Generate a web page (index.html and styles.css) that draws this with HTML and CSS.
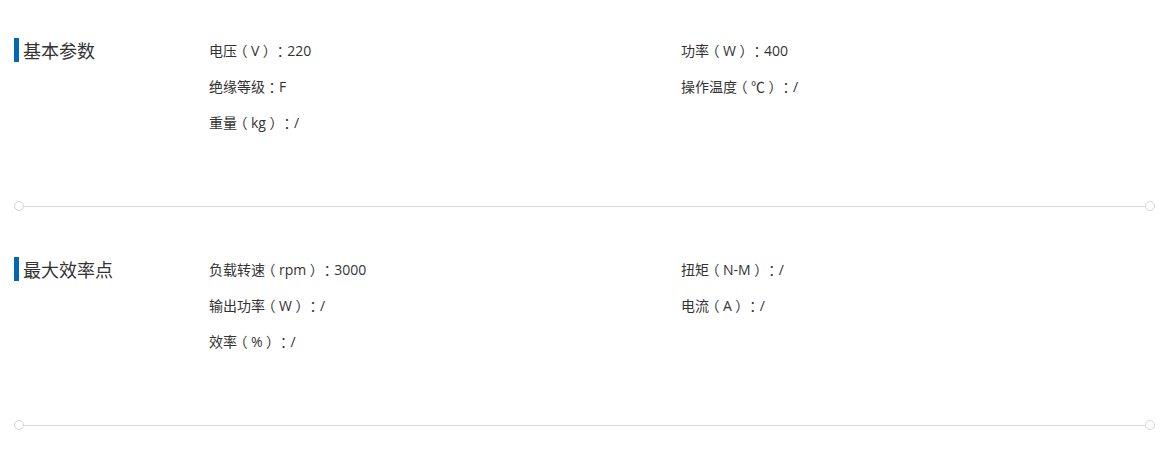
FILE: index.html
```html
<!DOCTYPE html>
<html lang="zh-CN">
<head>
<meta charset="utf-8">
<title>参数</title>
<link rel="stylesheet" href="styles.css">
</head>
<body>
<div class="specs">
  <section class="spec">
    <h3 class="spec-title">基本参数</h3>
    <ul class="spec-list">
      <li>电压<span class="pn">（</span>V<span class="pn">）</span><span class="pn">：</span>220</li>
      <li>功率<span class="pn">（</span>W<span class="pn">）</span><span class="pn">：</span>400</li>
      <li>绝缘等级<span class="pn">：</span>F</li>
      <li>操作温度<span class="pn">（</span>℃<span class="pn">）</span><span class="pn">：</span>/</li>
      <li>重量<span class="pn">（</span>kg<span class="pn">）</span><span class="pn">：</span>/</li>
    </ul>
  </section>
  <div class="divider"><span class="dot"></span><span class="line"></span><span class="dot"></span></div>
  <section class="spec">
    <h3 class="spec-title">最大效率点</h3>
    <ul class="spec-list">
      <li>负载转速<span class="pn">（</span>rpm<span class="pn">）</span><span class="pn">：</span>3000</li>
      <li>扭矩<span class="pn">（</span>N-M<span class="pn">）</span><span class="pn">：</span>/</li>
      <li>输出功率<span class="pn">（</span>W<span class="pn">）</span><span class="pn">：</span>/</li>
      <li>电流<span class="pn">（</span>A<span class="pn">）</span><span class="pn">：</span>/</li>
      <li>效率<span class="pn">（</span>%<span class="pn">）</span><span class="pn">：</span>/</li>
    </ul>
  </section>
  <div class="divider"><span class="dot"></span><span class="line"></span><span class="dot"></span></div>
</div>
</body>
</html>
```
FILE: styles.css
```css
* { box-sizing: border-box; }
html, body { margin: 0; padding: 0; background: #fff; }
body {
  font-family: "Open Sans", "Noto Sans CJK SC", sans-serif;
  color: #333;
}
.specs { padding: 0 13px 0 14px; }
.spec {
  display: flex;
  padding-top: 32px;
}
.spec-title {
  width: 195px;
  flex: none;
  margin: 6px 0 0;
  height: 24px;
  line-height: 24px;
  border-left: 5px solid #0068b7;
  padding-left: 4px;
  font-family: "Noto Sans CJK SC", sans-serif;
  font-size: 18px;
  font-weight: normal;
  color: #333;
}
.spec-list {
  list-style: none;
  margin: 0;
  padding: 0;
  flex: 1;
  display: grid;
  grid-template-columns: 472px 1fr;
  grid-auto-rows: 36px;
}
.spec-list li {
  font-size: 14px;
  line-height: 37px;
  white-space: nowrap;
  text-spacing-trim: space-all;
}
.pn {
  display: inline-block;
  width: 1em;
  text-align: center;
  font-feature-settings: "halt";
}
.divider {
  display: flex;
  align-items: center;
  height: 10px;
  margin: 61px 0 8px;
}
.dot {
  width: 10px;
  height: 10px;
  border: 1px solid #d6d6d6;
  border-radius: 50%;
  background: #fff;
  flex: none;
}
.line {
  flex: 1;
  height: 1px;
  background: #dcdcdc;
}
```
